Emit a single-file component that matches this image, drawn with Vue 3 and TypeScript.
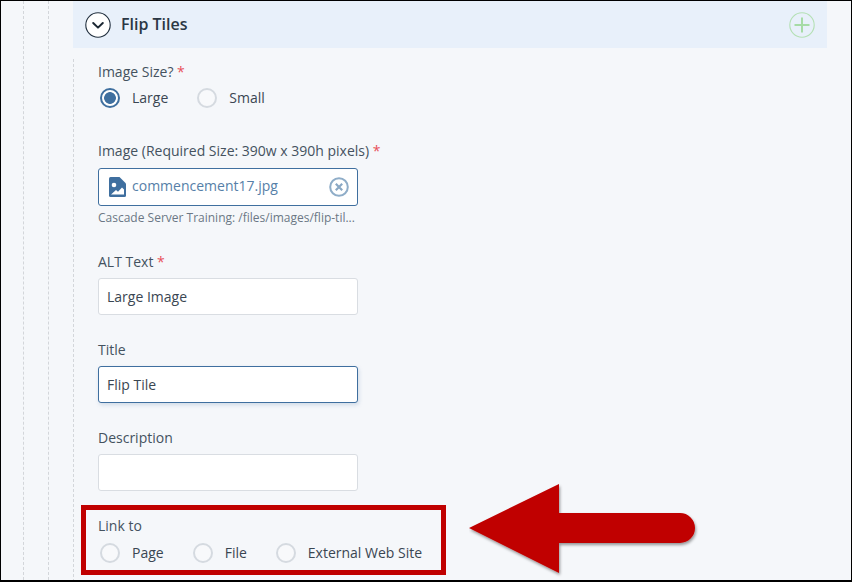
<script setup lang="ts">
interface RadioOption { label: string; checked?: boolean }
const sizes: RadioOption[] = [{ label: 'Large', checked: true }, { label: 'Small' }]
const links: RadioOption[] = [{ label: 'Page' }, { label: 'File' }, { label: 'External Web Site' }]
</script>

<template>
  <div class="frame">
    <div class="guide first">
      <div class="guide second">
        <header class="section-head">
          <button class="toggle" aria-label="Collapse">
            <svg width="26" height="26" viewBox="0 0 26 26">
              <circle cx="13" cy="13" r="12.2" fill="#fff" stroke="#22303f" stroke-width="1.1" />
              <path d="M8.2 11 L13 15.6 L17.8 11" fill="none" stroke="#1b2733" stroke-width="2" stroke-linecap="round" stroke-linejoin="round" />
            </svg>
          </button>
          <h2>Flip Tiles</h2>
          <svg class="add" width="26" height="26" viewBox="0 0 26 26">
            <circle cx="13" cy="13" r="12.2" fill="none" stroke="#b4e0b4" stroke-width="1.1" />
            <path d="M13 5.5 V20.5 M5.5 13 H20.5" stroke="#a6dba6" stroke-width="2" />
          </svg>
        </header>
        <div class="guide third">
          <div class="label">Image Size? <span class="req">*</span></div>
          <div class="radios sizes">
            <span v-for="o in sizes" :key="o.label" class="radio">
              <i class="dot" :class="{ on: o.checked }"></i>{{ o.label }}
            </span>
          </div>

          <div class="label image-label">Image (Required Size: 390w x 390h pixels) <span class="req">*</span></div>
          <div class="chooser">
            <svg class="file" width="17" height="20" viewBox="0 0 17 20">
              <path d="M1.5 0 H10.5 L17 6.5 V18.5 Q17 20 15.5 20 H1.5 Q0 20 0 18.5 V1.5 Q0 0 1.5 0 Z" fill="#3f6f9f" />
              <circle cx="5" cy="8" r="2.3" fill="#fff" />
              <path d="M2 17.5 L7 13 L9 14.8 L13 10.5 L15 12.5 V17.5 Z" fill="#fff" />
            </svg>
            <span class="file-name">commencement17.jpg</span>
            <svg class="clear" width="20" height="20" viewBox="0 0 20 20">
              <circle cx="10" cy="10" r="8.8" fill="none" stroke="#8fadc8" stroke-width="2" />
              <path d="M6.8 6.8 L13.2 13.2 M13.2 6.8 L6.8 13.2" stroke="#8aa8c4" stroke-width="2.2" />
            </svg>
          </div>
          <div class="path">Cascade Server Training: /files/images/flip-til...</div>

          <div class="label alt-label">ALT Text <span class="req">*</span></div>
          <div class="input">Large Image</div>

          <div class="label">Title</div>
          <div class="input focus">Flip Tile</div>

          <div class="label">Description</div>
          <div class="input"></div>

          <div class="label link-label">Link to</div>
          <div class="radios">
            <span v-for="o in links" :key="o.label" class="radio">
              <i class="dot"></i>{{ o.label }}
            </span>
          </div>
        </div>
      </div>
    </div>

    <div class="callout"></div>
    <svg class="arrow" width="240" height="100" viewBox="0 0 240 100">
      <defs>
        <filter id="sh" x="-10%" y="-10%" width="120%" height="130%">
          <feDropShadow dx="1" dy="2" stdDeviation="1.6" flood-color="#000" flood-opacity="0.4" />
        </filter>
      </defs>
      <path d="M0 46 L90 2 V31 H211 A15 15 0 0 1 211 61 H90 V91 Z" fill="#c00000" filter="url(#sh)" />
    </svg>
  </div>
</template>

<style>
html, body { margin: 0; padding: 0; }
</style>

<style scoped>
.frame {
  position: relative;
  box-sizing: border-box;
  width: 852px;
  height: 582px;
  overflow: hidden;
  background: #f5f7fa;
  border: 1px solid #000;
  border-bottom-width: 2px;
  font-family: "Open Sans", sans-serif;
  font-size: 14px;
  color: #44525f;
}
.guide { border-left: 1px dashed #d3d6da; }
.first { margin-left: 22px; padding-left: 24px; height: 100%; }
.second { padding-left: 24px; height: 100%; }
.section-head {
  display: flex;
  align-items: center;
  height: 47px;
  width: 754px;
  padding: 0 12px;
  box-sizing: border-box;
  background: #e8f0fa;
}
.toggle {
  width: 26px;
  height: 26px;
  padding: 0;
  border: 0;
  background: none;
  display: flex;
}
.section-head h2 {
  margin: -2px 0 0 10px;
  flex: 1;
  font-size: 16px;
  font-weight: 600;
  line-height: 22px;
  color: #2b3744;
}
.third { margin-top: 11px; padding: 3px 0 0 24px; height: 530px; }
.label { line-height: 20px; margin-bottom: 6px; }
.link-label { margin-bottom: 7px; }
.req { color: #e8505b; }
.radios { display: flex; height: 20px; padding-left: 2px; }
.sizes { margin-bottom: 33px; }
.radio { display: flex; align-items: center; color: #3a4652; margin-right: 29px; line-height: 20px; }
.dot {
  box-sizing: border-box;
  width: 20px;
  height: 20px;
  margin-right: 12px;
  border: 2px solid #d5dae0;
  border-radius: 50%;
  background: #f8f9fb;
}
.dot.on {
  border-color: #3f6f9f;
  background: radial-gradient(circle, #3f6f9f 0 5.5px, #fff 6.2px);
}
.image-label { margin-bottom: 7px; }
.chooser {
  display: flex;
  align-items: center;
  box-sizing: border-box;
  width: 260px;
  height: 38px;
  padding: 0 8px 0 10px;
  background: #fff;
  border: 1px solid #3f6f9f;
  border-radius: 3px;
}
.file-name { flex: 1; margin-left: 6px; padding-bottom: 4px; color: #5680a8; }
.path { font-size: 12px; line-height: 18px; margin-top: 3px; color: #6b7785; white-space: nowrap; }
.alt-label { margin-top: 25px; }
.input {
  box-sizing: border-box;
  width: 260px;
  height: 37px;
  margin-bottom: 25px;
  padding: 0 8px;
  line-height: 35px;
  background: #fff;
  border: 1px solid #d9dde2;
  border-radius: 3px;
  color: #3a4652;
}
.input.focus {
  border-color: #3f6f9f;
  box-shadow: 1px 2px 4px rgba(63, 111, 159, 0.2);
}
.callout {
  position: absolute;
  left: 80px;
  top: 504px;
  width: 365px;
  height: 70px;
  box-sizing: border-box;
  border: 5px solid #c00000;
}
.arrow {
  position: absolute;
  left: 468px;
  top: 481px;
}
</style>
